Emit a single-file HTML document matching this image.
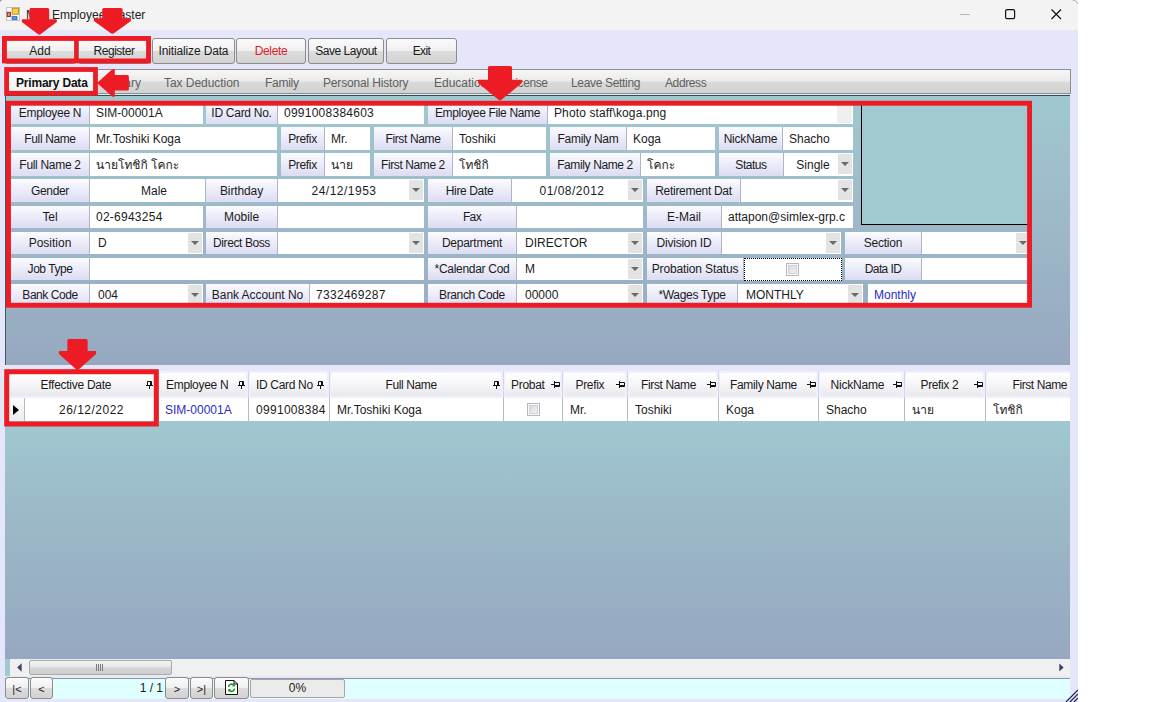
<!DOCTYPE html>
<html lang="en"><head><meta charset="utf-8"><title>Mst. Employee Master</title>
<style>

html,body{margin:0;padding:0;background:#fff;}
body{width:1152px;height:702px;position:relative;overflow:hidden;font-family:"Liberation Sans", "Loma", "Noto Sans Thai", "Noto Sans CJK SC", sans-serif;font-size:12px;color:#1b1b1b;}
.abs,.win,.win div,.win span{position:absolute;box-sizing:border-box;}
.win{left:0;top:0;width:1078px;height:702px;background:#e6e6fa;overflow:hidden;}
.title{left:0;top:0;width:1078px;height:30px;background:#f3f3f3;}
.btn{top:38px;height:26px;border:1px solid #8c8c8c;border-radius:3px;background:linear-gradient(#fbfbfb 0%,#f0f0f0 48%,#dcdcdc 52%,#d2d2d2 100%);text-align:center;line-height:25px;font-size:12px;white-space:nowrap;}
.tabs{left:5px;top:69px;width:1066px;height:25px;border:1px solid #8e8e8e;background:linear-gradient(#f6f6f6 0%,#ececec 45%,#d9d9d9 55%,#d2d2d2 100%);}
.tab{top:1px;height:23px;line-height:25px;color:#5f5f5f;white-space:nowrap;font-size:12px;}
.panel{left:5px;top:95px;width:1065px;height:270px;background:linear-gradient(#a0c8d0 0%,#9eb9c9 45%,#96a8c0 100%);border-top:1px solid #2f4f4f;border-left:1px solid #3c5c62;}
.lab{height:22px;line-height:22px;text-align:center;white-space:nowrap;overflow:hidden;background:linear-gradient(#fbfbff 0%,#ededfa 45%,#dcdcf3 100%);border-right:1px solid #b4b4c0;}
.inp{height:22px;line-height:22px;background:#fff;white-space:nowrap;overflow:hidden;padding-left:6px;}
.inp.c{text-align:center;padding-left:0;}
.dd{width:14px;height:20px;top:1px;background:#e3e3e3;}
.dd:after{content:"";position:absolute;left:3px;top:8px;border-left:4px solid transparent;border-right:4px solid transparent;border-top:4px solid #6a6a6a;}
.chk{width:13px;height:13px;border:1px solid #b4b8c4;background:linear-gradient(135deg,#d4d4d8,#f8f8f8);box-shadow:inset 0 0 0 1px #fafafa, inset 0 0 0 2px #d0d0d6;}
.grid{left:5px;top:371px;width:1065px;height:288px;overflow:hidden;background:linear-gradient(#a0c8d0 0px,#a0c8d0 50px,#9bb8c8 150px,#96a8c0 100%);}
.gh{top:0;height:27px;background:#f0f0fc;}
.gh{border-right:1px solid #d4d4ee;}
.gh i{position:absolute;left:1px;right:2px;top:2px;bottom:2px;border-radius:2px;background:linear-gradient(#ffffff 0%,#f6f6f8 50%,#e8e8ee 100%);}
.gh b{position:absolute;top:0;height:27px;line-height:28px;font-weight:normal;white-space:nowrap;}
.gc{top:27px;height:23px;line-height:25px;background:#fff;border-right:1px solid #bababa;white-space:nowrap;overflow:hidden;padding-left:7px;}
.sb{left:5px;top:659px;width:1065px;height:17px;background:#f0f0f0;}
.st{left:5px;top:678px;width:1065px;height:21px;background:#e0ffff;border-top:1px solid #8a9aa0;}
.nb{top:677px;height:22px;border:1px solid #8c8c8c;border-radius:3px;background:linear-gradient(#fbfbfb 0%,#f0f0f0 48%,#dcdcdc 52%,#d2d2d2 100%);text-align:center;line-height:23px;font-size:11px;color:#222;}

</style></head><body>
<div class="win">
<div class="title"></div>
<svg class="abs" style="left:0;top:0" width="1078" height="4" viewBox="0 0 1078 4"><path d="M1072.5 0Q1077 0.5 1078 4" fill="none" stroke="#b4b4b4" stroke-width="1"/><path d="M0 2.5Q0.3 0.3 2.5 0H0Z" fill="#8a8a8a"/></svg>
<svg class="abs" style="left:6px;top:7px" width="14" height="14" viewBox="0 0 14 14"><rect x="0.5" y="0.5" width="13" height="13" fill="#fbfbfd" stroke="#c4c4c8" stroke-width="1"/><rect x="6.2" y="1.2" width="6.4" height="6" fill="#fbd040" stroke="#b48c18" stroke-width="0.9"/><rect x="1.2" y="5.3" width="3.2" height="4.2" fill="#f08868" stroke="#7a2418" stroke-width="0.9"/><rect x="6" y="9.6" width="5" height="3" fill="#5a96ee" stroke="#2c62c0" stroke-width="0.8"/></svg>
<div style="left:26px;top:6px;height:18px;line-height:18px;font-size:12px;white-space:nowrap;color:#222;">Mst. Employee Master</div>
<svg class="abs" style="left:950px;top:0" width="128" height="30" viewBox="0 0 128 30"><path d="M10 14.5H20" stroke="#b8b8b8" stroke-width="1"/><rect x="55.6" y="9.6" width="9" height="9" rx="1.3" fill="none" stroke="#111" stroke-width="1.2"/><path d="M101.5 9.5L111 19M111 9.5L101.5 19" stroke="#111" stroke-width="1.2" fill="none"/></svg>
<div class="btn" style="left:4px;width:72px;letter-spacing:0.01px;">Add</div>
<div class="btn" style="left:78px;width:72px;letter-spacing:-0.48px;">Register</div>
<div class="btn" style="left:152px;width:83px;letter-spacing:-0.15px;">Initialize Data</div>
<div class="btn" style="left:236px;width:70px;letter-spacing:-0.36px;color:#e0202a;">Delete</div>
<div class="btn" style="left:308px;width:76px;letter-spacing:-0.49px;">Save Layout</div>
<div class="btn" style="left:386px;width:71px;letter-spacing:-0.6px;">Exit</div>
<div class="tabs">
<div style="left:0;top:0;width:92px;height:23px;background:linear-gradient(#fdfdfd,#f2f2f2);"></div>
<div class="tab" style="left:10px;font-weight:bold;color:#111;letter-spacing:-0.2px;">Primary Data</div>
<div class="tab" style="left:101px;">Salary</div>
<div class="tab" style="left:158px;letter-spacing:-0.05px;">Tax Deduction</div>
<div class="tab" style="left:259px;letter-spacing:-0.27px;">Family</div>
<div class="tab" style="left:317px;letter-spacing:-0.17px;">Personal History</div>
<div class="tab" style="left:428px;">Education</div>
<div class="tab" style="left:503px;letter-spacing:-0.4px;">License</div>
<div class="tab" style="left:565px;letter-spacing:-0.33px;">Leave Setting</div>
<div class="tab" style="left:659px;letter-spacing:-0.39px;">Address</div>
</div>
<div class="panel"></div>
<div style="left:861px;top:101px;width:170px;height:124px;background:#a0cad0;border:1px solid #000;"></div>
<div class="lab" style="left:11px;top:101px;height:23px;line-height:24px;width:79px;letter-spacing:-0.31px;">Employee N</div>
<div class="inp" style="left:90px;top:101px;height:23px;line-height:24px;width:113px;">SIM-00001A</div>
<div class="lab" style="left:206px;top:101px;height:23px;line-height:24px;width:72px;letter-spacing:-0.28px;">ID Card No.</div>
<div class="inp" style="left:278px;top:101px;height:23px;line-height:24px;width:146px;letter-spacing:0.25px;">0991008384603</div>
<div class="lab" style="left:428px;top:101px;height:23px;line-height:24px;width:120px;letter-spacing:-0.35px;">Employee File Name</div>
<div class="inp" style="left:548px;top:101px;height:23px;line-height:24px;width:305px;letter-spacing:0.12px;">Photo staff\koga.png</div>
<div style="left:837px;top:101px;width:15px;height:22px;background:#efefef;"></div>
<div class="lab" style="left:11px;top:127px;height:23px;line-height:24px;width:79px;letter-spacing:-0.38px;">Full Name</div>
<div class="inp" style="left:90px;top:127px;height:23px;line-height:24px;width:187px;">Mr.Toshiki Koga</div>
<div class="lab" style="left:281px;top:127px;height:23px;line-height:24px;width:44px;letter-spacing:-0.33px;">Prefix</div>
<div class="inp" style="left:325px;top:127px;height:23px;line-height:24px;width:45px;">Mr.</div>
<div class="lab" style="left:374px;top:127px;height:23px;line-height:24px;width:79px;letter-spacing:-0.36px;">First Name</div>
<div class="inp" style="left:453px;top:127px;height:23px;line-height:24px;width:93px;">Toshiki</div>
<div class="lab" style="left:550px;top:127px;height:23px;line-height:24px;width:77px;letter-spacing:-0.32px;">Family Nam</div>
<div class="inp" style="left:627px;top:127px;height:23px;line-height:24px;width:88px;">Koga</div>
<div class="lab" style="left:719px;top:127px;height:23px;line-height:24px;width:64px;letter-spacing:-0.21px;">NickName</div>
<div class="inp" style="left:783px;top:127px;height:23px;line-height:24px;width:70px;">Shacho</div>
<div class="lab" style="left:11px;top:153px;height:23px;line-height:24px;width:79px;letter-spacing:-0.31px;">Full Name 2</div>
<div class="inp" style="left:90px;top:153px;height:23px;line-height:24px;width:187px;">นายโทชิกิ โคกะ</div>
<div class="lab" style="left:281px;top:153px;height:23px;line-height:24px;width:44px;letter-spacing:-0.33px;">Prefix</div>
<div class="inp" style="left:325px;top:153px;height:23px;line-height:24px;width:45px;">นาย</div>
<div class="lab" style="left:374px;top:153px;height:23px;line-height:24px;width:79px;letter-spacing:-0.41px;">First Name 2</div>
<div class="inp" style="left:453px;top:153px;height:23px;line-height:24px;width:93px;">โทชิกิ</div>
<div class="lab" style="left:550px;top:153px;height:23px;line-height:24px;width:91px;letter-spacing:-0.38px;">Family Name 2</div>
<div class="inp" style="left:641px;top:153px;height:23px;line-height:24px;width:74px;">โคกะ</div>
<div class="lab" style="left:719px;top:153px;height:23px;line-height:24px;width:65px;letter-spacing:-0.46px;">Status</div>
<div class="inp c" style="left:784px;top:153px;height:23px;line-height:24px;width:69px;padding-right:14px;padding-left:3px;">Single<div class="dd" style="left:54px"></div></div>
<div class="lab" style="left:11px;top:179px;height:23px;line-height:24px;width:79px;letter-spacing:-0.37px;">Gender</div>
<div class="inp c" style="left:90px;top:179px;height:23px;line-height:24px;width:115px;padding-right:0px;padding-left:13px;">Male</div>
<div class="lab" style="left:206px;top:179px;height:23px;line-height:24px;width:72px;letter-spacing:-0.12px;">Birthday</div>
<div class="inp c" style="left:278px;top:179px;height:23px;line-height:24px;width:146px;padding-right:14px;letter-spacing:0.5px;">24/12/1953<div class="dd" style="left:131px"></div></div>
<div class="lab" style="left:428px;top:179px;height:23px;line-height:24px;width:84px;letter-spacing:-0.36px;">Hire Date</div>
<div class="inp c" style="left:512px;top:179px;height:23px;line-height:24px;width:131px;padding-right:14px;padding-left:3px;letter-spacing:0.5px;">01/08/2012<div class="dd" style="left:116px"></div></div>
<div class="lab" style="left:647px;top:179px;height:23px;line-height:24px;width:94px;letter-spacing:-0.3px;">Retirement Dat</div>
<div class="inp" style="left:741px;top:179px;height:23px;line-height:24px;width:112px;padding-left:8px;"><div class="dd" style="left:97px"></div></div>
<div class="lab" style="left:11px;top:206px;height:22px;line-height:22px;width:79px;letter-spacing:-0.09px;">Tel</div>
<div class="inp" style="left:90px;top:206px;height:22px;line-height:22px;width:113px;letter-spacing:0.25px;">02-6943254</div>
<div class="lab" style="left:206px;top:206px;height:22px;line-height:22px;width:72px;letter-spacing:-0.04px;">Mobile</div>
<div class="inp" style="left:278px;top:206px;height:22px;line-height:22px;width:146px;"></div>
<div class="lab" style="left:428px;top:206px;height:22px;line-height:22px;width:89px;letter-spacing:-0.6px;">Fax</div>
<div class="inp" style="left:517px;top:206px;height:22px;line-height:22px;width:126px;"></div>
<div class="lab" style="left:647px;top:206px;height:22px;line-height:22px;width:75px;letter-spacing:-0.03px;">E-Mail</div>
<div class="inp" style="left:722px;top:206px;height:22px;line-height:22px;width:131px;">attapon@simlex-grp.c</div>
<div class="lab" style="left:11px;top:232px;height:22px;line-height:22px;width:79px;">Position</div>
<div class="inp" style="left:90px;top:232px;height:22px;line-height:22px;width:113px;padding-left:8px;">D<div class="dd" style="left:98px"></div></div>
<div class="lab" style="left:206px;top:232px;height:22px;line-height:22px;width:72px;letter-spacing:-0.4px;">Direct Boss</div>
<div class="inp" style="left:278px;top:232px;height:22px;line-height:22px;width:146px;padding-left:8px;"><div class="dd" style="left:131px"></div></div>
<div class="lab" style="left:428px;top:232px;height:22px;line-height:22px;width:89px;letter-spacing:-0.25px;">Department</div>
<div class="inp" style="left:517px;top:232px;height:22px;line-height:22px;width:126px;padding-left:8px;">DIRECTOR<div class="dd" style="left:111px"></div></div>
<div class="lab" style="left:647px;top:232px;height:22px;line-height:22px;width:75px;letter-spacing:-0.23px;">Division ID</div>
<div class="inp" style="left:722px;top:232px;height:22px;line-height:22px;width:119px;padding-left:8px;"><div class="dd" style="left:104px"></div></div>
<div class="lab" style="left:845px;top:232px;height:22px;line-height:22px;width:77px;letter-spacing:-0.23px;">Section</div>
<div class="inp" style="left:922px;top:232px;height:22px;line-height:22px;width:109px;padding-left:8px;"><div class="dd" style="left:94px"></div></div>
<div class="lab" style="left:11px;top:258px;height:22px;line-height:22px;width:79px;letter-spacing:-0.46px;">Job Type</div>
<div class="inp" style="left:90px;top:258px;height:22px;line-height:22px;width:334px;"></div>
<div class="lab" style="left:428px;top:258px;height:22px;line-height:22px;width:89px;letter-spacing:-0.3px;">*Calendar Cod</div>
<div class="inp" style="left:517px;top:258px;height:22px;line-height:22px;width:126px;padding-left:8px;">M<div class="dd" style="left:111px"></div></div>
<div class="lab" style="left:647px;top:258px;height:22px;line-height:22px;width:97px;letter-spacing:-0.13px;">Probation Status</div>
<div style="left:744px;top:258px;width:98px;height:23px;background:#fff;border:1px dotted #000;"><div class="chk" style="left:41px;top:4px"></div></div>
<div class="lab" style="left:845px;top:258px;height:22px;line-height:22px;width:77px;letter-spacing:-0.59px;">Data ID</div>
<div class="inp" style="left:922px;top:258px;height:22px;line-height:22px;width:109px;"></div>
<div class="lab" style="left:11px;top:284px;height:22px;line-height:22px;width:79px;letter-spacing:-0.45px;">Bank Code</div>
<div class="inp" style="left:90px;top:284px;height:22px;line-height:22px;width:113px;padding-left:8px;">004<div class="dd" style="left:98px"></div></div>
<div class="lab" style="left:206px;top:284px;height:22px;line-height:22px;width:104px;letter-spacing:-0.05px;">Bank Account No</div>
<div class="inp" style="left:310px;top:284px;height:22px;line-height:22px;width:114px;letter-spacing:0.3px;">7332469287</div>
<div class="lab" style="left:428px;top:284px;height:22px;line-height:22px;width:89px;letter-spacing:-0.39px;">Branch Code</div>
<div class="inp" style="left:517px;top:284px;height:22px;line-height:22px;width:126px;padding-left:8px;">00000<div class="dd" style="left:111px"></div></div>
<div class="lab" style="left:647px;top:284px;height:22px;line-height:22px;width:91px;letter-spacing:-0.32px;">*Wages Type</div>
<div class="inp" style="left:738px;top:284px;height:22px;line-height:22px;width:125px;padding-left:8px;">MONTHLY<div class="dd" style="left:110px"></div></div>
<div class="inp" style="left:868px;top:284px;height:22px;line-height:22px;width:163px;color:#2a2ac8;">Monthly</div>
<div class="grid">
<div class="gh" style="left:0px;width:154px"><i></i><b style="left:35.5px;letter-spacing:-0.27px;">Effective Date</b><svg style="position:absolute;left:141px;top:10px" width="7" height="8" viewBox="0 0 7 8"><path d="M1.5 0.5H5.5V4.5H1.5ZM0 4.5H7M3.5 4.5V8" fill="none" stroke="#111" stroke-width="1"/><path d="M4.7 0.5V4.5" stroke="#111" stroke-width="1.4"/></svg></div>
<div class="gc" style="left:20px;width:134px;text-align:center;padding-left:0;letter-spacing:0.5px;">26/12/2022</div>
<div class="gh" style="left:154px;width:90px"><i></i><b style="left:7px;letter-spacing:-0.31px;">Employee N</b><svg style="position:absolute;left:79px;top:10px" width="7" height="8" viewBox="0 0 7 8"><path d="M1.5 0.5H5.5V4.5H1.5ZM0 4.5H7M3.5 4.5V8" fill="none" stroke="#111" stroke-width="1"/><path d="M4.7 0.5V4.5" stroke="#111" stroke-width="1.4"/></svg></div>
<div class="gc" style="left:154px;width:90px;color:#2c2cc4;padding-left:6px;">SIM-00001A</div>
<div class="gh" style="left:244px;width:81px"><i></i><b style="left:7px;letter-spacing:-0.32px;">ID Card No</b><svg style="position:absolute;left:68px;top:10px" width="7" height="8" viewBox="0 0 7 8"><path d="M1.5 0.5H5.5V4.5H1.5ZM0 4.5H7M3.5 4.5V8" fill="none" stroke="#111" stroke-width="1"/><path d="M4.7 0.5V4.5" stroke="#111" stroke-width="1.4"/></svg></div>
<div class="gc" style="left:244px;width:81px;letter-spacing:0.3px;">0991008384</div>
<div class="gh" style="left:325px;width:174px"><i></i><b style="left:55.5px;letter-spacing:-0.38px;">Full Name</b><svg style="position:absolute;left:163px;top:10px" width="7" height="8" viewBox="0 0 7 8"><path d="M1.5 0.5H5.5V4.5H1.5ZM0 4.5H7M3.5 4.5V8" fill="none" stroke="#111" stroke-width="1"/><path d="M4.7 0.5V4.5" stroke="#111" stroke-width="1.4"/></svg></div>
<div class="gc" style="left:325px;width:174px;">Mr.Toshiki Koga</div>
<div class="gh" style="left:499px;width:59px"><i></i><b style="left:7px;letter-spacing:-0.3px;">Probat</b><svg style="position:absolute;left:47px;top:10px" width="9" height="7" viewBox="0 0 9 7"><path d="M3.5 1.5H8.5V5.5H3.5ZM3.5 0V7M0 3.5H3.5" fill="none" stroke="#111" stroke-width="1"/><path d="M3.5 4.7H8.5" stroke="#111" stroke-width="1.4"/></svg></div>
<div class="gc" style="left:499px;width:59px;padding:0"><div class="chk" style="left:23px;top:5px"></div></div>
<div class="gh" style="left:558px;width:65px"><i></i><b style="left:12.5px;letter-spacing:-0.33px;">Prefix</b><svg style="position:absolute;left:53px;top:10px" width="9" height="7" viewBox="0 0 9 7"><path d="M3.5 1.5H8.5V5.5H3.5ZM3.5 0V7M0 3.5H3.5" fill="none" stroke="#111" stroke-width="1"/><path d="M3.5 4.7H8.5" stroke="#111" stroke-width="1.4"/></svg></div>
<div class="gc" style="left:558px;width:65px;">Mr.</div>
<div class="gh" style="left:623px;width:91px"><i></i><b style="left:13px;letter-spacing:-0.36px;">First Name</b><svg style="position:absolute;left:79px;top:10px" width="9" height="7" viewBox="0 0 9 7"><path d="M3.5 1.5H8.5V5.5H3.5ZM3.5 0V7M0 3.5H3.5" fill="none" stroke="#111" stroke-width="1"/><path d="M3.5 4.7H8.5" stroke="#111" stroke-width="1.4"/></svg></div>
<div class="gc" style="left:623px;width:91px;">Toshiki</div>
<div class="gh" style="left:714px;width:100px"><i></i><b style="left:11px;letter-spacing:-0.34px;">Family Name</b><svg style="position:absolute;left:88px;top:10px" width="9" height="7" viewBox="0 0 9 7"><path d="M3.5 1.5H8.5V5.5H3.5ZM3.5 0V7M0 3.5H3.5" fill="none" stroke="#111" stroke-width="1"/><path d="M3.5 4.7H8.5" stroke="#111" stroke-width="1.4"/></svg></div>
<div class="gc" style="left:714px;width:100px;">Koga</div>
<div class="gh" style="left:814px;width:86px"><i></i><b style="left:11.5px;letter-spacing:-0.21px;">NickName</b><svg style="position:absolute;left:74px;top:10px" width="9" height="7" viewBox="0 0 9 7"><path d="M3.5 1.5H8.5V5.5H3.5ZM3.5 0V7M0 3.5H3.5" fill="none" stroke="#111" stroke-width="1"/><path d="M3.5 4.7H8.5" stroke="#111" stroke-width="1.4"/></svg></div>
<div class="gc" style="left:814px;width:86px;">Shacho</div>
<div class="gh" style="left:900px;width:81px"><i></i><b style="left:15.5px;letter-spacing:-0.36px;">Prefix 2</b><svg style="position:absolute;left:69px;top:10px" width="9" height="7" viewBox="0 0 9 7"><path d="M3.5 1.5H8.5V5.5H3.5ZM3.5 0V7M0 3.5H3.5" fill="none" stroke="#111" stroke-width="1"/><path d="M3.5 4.7H8.5" stroke="#111" stroke-width="1.4"/></svg></div>
<div class="gc" style="left:900px;width:81px;">นาย</div>
<div class="gh" style="left:981px;width:130px"><i></i><b style="left:26.5px;letter-spacing:-0.41px;">First Name 2</b></div>
<div class="gc" style="left:981px;width:130px;">โทชิกิ</div>
<div class="gc" style="left:4px;width:16px;padding:0;background:linear-gradient(#fdfdfd,#ececf2);"><svg style="position:absolute;left:4px;top:7px" width="6" height="10" viewBox="0 0 6 10"><path d="M0 0L6 5L0 10Z" fill="#000"/></svg></div>
</div>
<div class="sb"><div style="left:0;top:0;width:5px;height:17px;background:#a0c8d0"></div><svg style="position:absolute;left:12px;top:4px" width="5" height="9" viewBox="0 0 5 9"><path d="M4.6 0.3L0.2 4.5L4.6 8.7Z" fill="#3a4060"/></svg><div style="left:24px;top:1px;width:143px;height:15px;border:1px solid #a8a8a8;border-radius:2px;background:linear-gradient(#f4f4f4,#e6e6e6 45%,#d4d4d4 55%,#cfcfcf)"><svg style="position:absolute;left:66px;top:3px" width="8" height="7" viewBox="0 0 8 7"><path d="M0.5 0V7M2.5 0V7M4.5 0V7M6.5 0V7" stroke="#7a7a7a" stroke-width="1"/></svg></div><svg style="position:absolute;left:1054px;top:4px" width="5" height="9" viewBox="0 0 5 9"><path d="M0.3 0.5L4.6 4.5L0.3 8.5Z" fill="#3a4060"/></svg></div>
<div class="st"></div>
<div class="nb" style="left:5px;width:24px">|&lt;</div>
<div class="nb" style="left:30px;width:23px">&lt;</div>
<div class="nb" style="left:165px;width:24px">&gt;</div>
<div class="nb" style="left:190px;width:23px">&gt;|</div>
<div style="left:53px;top:679px;width:110px;height:19px;line-height:19px;text-align:right;white-space:nowrap;">1 / 1</div>
<div class="nb" style="left:214px;width:35px"><svg style="position:absolute;left:10px;top:2px" width="13" height="15" viewBox="0 0 13 15"><path d="M0.5 0.5H9L12.5 4V14.5H0.5Z" fill="#fff" stroke="#111" stroke-width="1"/><path d="M9 0.5V4H12.5" fill="none" stroke="#111" stroke-width="1"/><path d="M3.5 7a3 3 0 0 1 5.5-1.5M9.5 8.5a3 3 0 0 1-5.5 1.5" fill="none" stroke="#1a9a1a" stroke-width="1.6"/><path d="M9.8 3.6V6.4H7zM3.2 11.9V9.1H6z" fill="#1a9a1a"/></svg></div>
<div style="left:250px;top:679px;width:95px;height:19px;line-height:17px;border:1px solid #a6a6a6;border-radius:2px;background:#ebebeb;text-align:center;">0%</div>
<svg class="abs" style="left:1064px;top:688px" width="14" height="14" viewBox="0 0 14 14"><path d="M2 14L14 2M6 14L14 6M10 14L14 10" stroke="#1c1c5c" stroke-width="1.2"/></svg>
</div>
<svg class="abs" style="left:0;top:0;pointer-events:none" width="1152" height="702" viewBox="0 0 1152 702">
<g fill="none" stroke="#ed1c24">
<rect x="4.45" y="38.45" width="144.10" height="22.50" stroke-width="4.9"/>
<path d="M76.2 38V61" stroke-width="4.2"/>
<rect x="6.60" y="69.50" width="88.90" height="23.80" stroke-width="4.8"/>
<rect x="8.45" y="103.25" width="1021.10" height="202.00" stroke-width="4.9"/>
<rect x="6.70" y="371.70" width="149.60" height="52.30" stroke-width="5"/>
</g>
<path d="M31.00 8H47.60Q49.20 8 49.20 9.6V19.2H56.00Q56.80 19.2 56.80 20.0V22.0L40.50 34.20Q39.30 35.10 38.10 34.20L21.80 22.0V20.0Q21.80 19.2 22.60 19.2H29.40V9.6Q29.40 8 31.00 8Z" fill="#ed1c24"/>
<path d="M103.80 8H121.00Q122.60 8 122.60 9.6V18.3H130.10Q130.90 18.3 130.90 19.1V21.1L113.60 33.40Q112.40 34.30 111.20 33.40L93.90 21.1V19.1Q93.90 18.3 94.70 18.3H102.20V9.6Q102.20 8 103.80 8Z" fill="#ed1c24"/>
<path d="M489.60 66H510.40Q512.00 66 512.00 67.6V79.7H521.10Q521.90 79.7 521.90 80.5V82.9L501.20 100.00Q500.00 100.90 498.80 100.00L478.10 82.9V80.5Q478.10 79.7 478.90 79.7H488.00V67.6Q488.00 66 489.60 66Z" fill="#ed1c24"/>
<path d="M68.95 339.1H86.05Q87.65 339.1 87.65 340.70000000000005V351H95.25Q96.05 351 96.05 351.8V354L78.70 369.40Q77.50 370.30 76.30 369.40L58.95 354V351.8Q58.95 351 59.75 351H67.35V340.70000000000005Q67.35 339.1 68.95 339.1Z" fill="#ed1c24"/>
<path d="M97 83L112 69.6Q112.6 69.2 113.6 69.2H114.8V75H127.4Q128.9 75 128.9 76.5V89.1Q128.9 90.6 127.4 90.6H114.8V96.7H113.6Q112.6 96.7 112 96.2Z" fill="#ed1c24"/>
</svg>
</body></html>
